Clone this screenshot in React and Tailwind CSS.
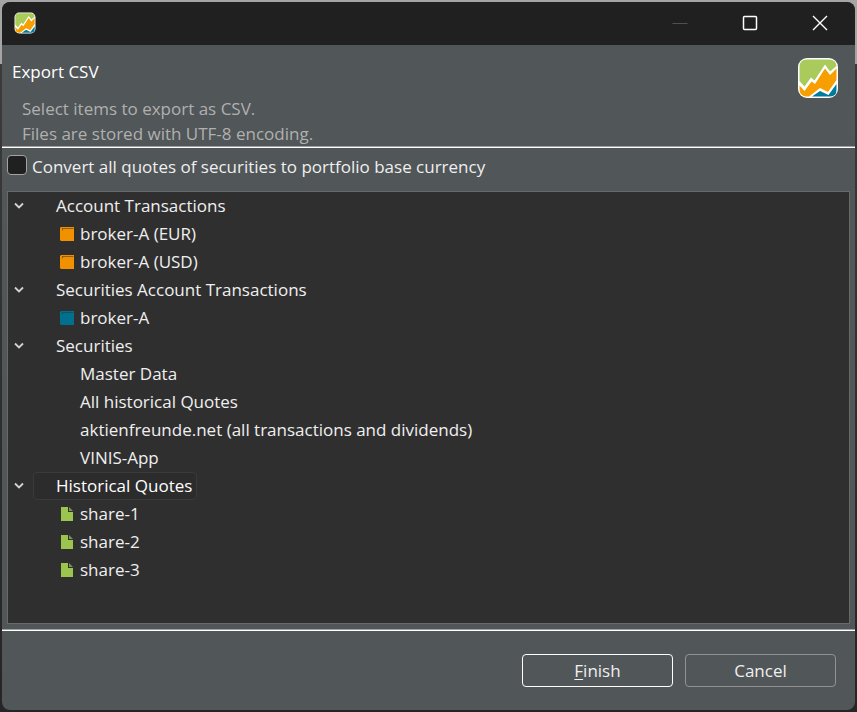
import { useState } from "react";

const groups = [
  {
    label: "Account Transactions",
    icon: "account",
    items: ["broker-A (EUR)", "broker-A (USD)"],
  },
  {
    label: "Securities Account Transactions",
    icon: "portfolio",
    items: ["broker-A"],
  },
  {
    label: "Securities",
    items: [
      "Master Data",
      "All historical Quotes",
      "aktienfreunde.net (all transactions and dividends)",
      "VINIS-App",
    ],
  },
  {
    label: "Historical Quotes",
    icon: "security",
    items: ["share-1", "share-2", "share-3"],
  },
];

function Logo({ className }) {
  return (
    <svg viewBox="0 0 42 42" className={className} aria-hidden="true">
      <rect x="1" y="1" width="40" height="40" rx="9" fill="#fff" />
      <path d="M10 2.500H32Q39 2.500 39.500 9L33 14.500L28 7.500L17.500 23.500L14 20.500L7.500 29.500L2.500 24V10Q2.500 2.500 10 2.500Z" fill="#a8cb5c" />
      <path d="M39.500 11.500V23L31 35L23 31L12 39.500H9Q2.500 39 2.500 32V28.500L7.500 34L14.500 24.500L18 27L28 11.500L33 18Z" fill="#f79f00" />
      <path d="M39.500 27V33Q39.500 39.500 33 39.500H15L23 34L31.500 38Z" fill="#007c9b" />
    </svg>
  );
}

function BookIcon({ className }) {
  return (
    <svg viewBox="0 0 14 14" className={className} aria-hidden="true">
      <path d="M1 0H14V14H1L0 13V1Z" fill="currentColor" />
      <path d="M2 1.500H13.500M2.500 1.500V3.500" fill="none" stroke="#2f2f2f" strokeOpacity="0.5" />
    </svg>
  );
}

function FileIcon({ className }) {
  return (
    <svg viewBox="0 0 14 14" className={className} aria-hidden="true">
      <path d="M1 0H8V5H13V14H1Z" fill="currentColor" />
      <path d="M9 0L13 4H9Z" fill="currentColor" fillOpacity="0.7" />
    </svg>
  );
}

function ItemIcon({ kind }) {
  if (kind === "account") return <BookIcon className="mr-1.5 size-3.5 text-[#f29100]" />;
  if (kind === "portfolio") return <BookIcon className="mr-1.5 size-3.5 text-[#00708f]" />;
  if (kind === "security") return <FileIcon className="mr-1.5 size-3.5 text-[#9bc54f]" />;
  return <span className="mr-1.5 size-3.5" />;
}

function Group({ group, selected, onSelect }) {
  const [open, setOpen] = useState(true);
  return (
    <li role="treeitem" aria-expanded={open} aria-selected={selected}>
      <div className="flex h-7 items-center">
        <button
          type="button"
          aria-label={`Toggle ${group.label}`}
          onClick={() => setOpen(!open)}
          className="flex h-7 w-[25px] items-center pl-1.5"
        >
          <svg viewBox="0 0 10 10" className="size-2.5" fill="none" stroke="#d4d4d4" strokeWidth="1.800" aria-hidden="true">
            <path d="M1 2.500L5 6.500L9 2.500" />
          </svg>
        </button>
        <button
          type="button"
          onClick={onSelect}
          className={
            selected
              ? "h-7 rounded-sm border border-[#3a3a3a] bg-[#2c2c2c] pr-1 pl-[22px] text-white"
              : "h-7 rounded-sm border border-transparent pr-1 pl-[22px]"
          }
        >
          {group.label}
        </button>
      </div>
      {open && (
        <ul role="group">
          {group.items.map((item) => (
            <li key={item} role="treeitem" className="flex h-7 items-center pl-[52px]">
              <ItemIcon kind={group.icon} />
              <span>{item}</span>
            </li>
          ))}
        </ul>
      )}
    </li>
  );
}

export default function App() {
  const [selected, setSelected] = useState("Historical Quotes");
  return (
    <div className="flex min-h-screen bg-linear-to-b from-[#a5a5a5] from-9% via-[#3b3b3b] via-9% to-[#252525] p-0.5 font-['Open_Sans',sans-serif] text-[17px] leading-6 text-[#efefef]">
      <main className="flex flex-1 flex-col overflow-hidden rounded-lg bg-[#515658]">
        <div className="flex h-[43px] items-center justify-between bg-[#202020] pb-0.5 pl-3">
          <Logo className="size-[22px]" />
          <div className="flex h-full">
            <button type="button" aria-label="Minimize" disabled className="grid w-[70px] place-items-center">
              <svg viewBox="0 0 16 16" className="size-4" stroke="#505050" aria-hidden="true">
                <path d="M0.500 8.500H15.500" />
              </svg>
            </button>
            <button type="button" aria-label="Maximize" className="grid w-[70px] place-items-center">
              <svg viewBox="0 0 16 16" className="size-4" fill="none" stroke="#fff" strokeWidth="1.500" aria-hidden="true">
                <rect x="1.500" y="1.500" width="13" height="13" rx="1" />
              </svg>
            </button>
            <button type="button" aria-label="Close" className="grid w-[70px] place-items-center">
              <svg viewBox="0 0 16 16" className="size-4" stroke="#fff" strokeWidth="1.400" aria-hidden="true">
                <path d="M1 1L15 15M15 1L1 15" />
              </svg>
            </button>
          </div>
        </div>

        <header className="flex justify-between border-b border-[#a0a0a0] pt-3 pr-4 pl-2.5">
          <div>
            <h1 className="pt-[3px] text-white">Export CSV</h1>
            <p className="mt-3 ml-2.5 leading-[25px] text-[#b0b0b0]">
              Select items to export as CSV.
              <br />
              Files are stored with UTF-8 encoding.
            </p>
          </div>
          <Logo className="size-[42px]" />
        </header>

        <div className="flex flex-1 flex-col border-y border-t-white border-b-[#a0a0a0] px-[5px] pb-[5px]">
          <label className="flex h-[43px] items-start gap-[5px] pt-[7px] leading-6">
            <input
              type="checkbox"
              className="size-5 appearance-none rounded-sm border border-[#a3a3a3] bg-[#202020] checked:bg-[#4cc2ff]"
            />
            <span>Convert all quotes of securities to portfolio base currency</span>
          </label>
          <ul role="tree" aria-label="Export items" className="flex-1 border border-[#67696a] bg-[#2f2f2f]">
            {groups.map((group) => (
              <Group
                key={group.label}
                group={group}
                selected={selected === group.label}
                onSelect={() => setSelected(group.label)}
              />
            ))}
          </ul>
        </div>

        <footer className="flex justify-end gap-3 border-t border-white px-[19px] py-[23px]">
          <button type="button" className="h-[33px] w-[151px] rounded-sm border border-white">
            <span className="underline underline-offset-2">F</span>inish
          </button>
          <button type="button" className="h-[33px] w-[151px] rounded-sm border border-[#929292]">
            Cancel
          </button>
        </footer>
      </main>
    </div>
  );
}
